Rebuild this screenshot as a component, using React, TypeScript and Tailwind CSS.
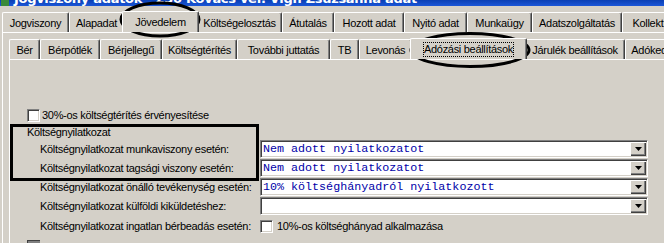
import React from "react";

const FONT = { fontFamily: '"Liberation Sans", Arial, sans-serif' };

type TabDef = { label: string; w: string; selected?: boolean; focus?: boolean };

function Tab({ label, w, selected, focus }: TabDef) {
  return (
    <div
      className={
        "flex items-center justify-center shrink-0 border-t border-l border-white border-r border-r-[#404040] shadow-[inset_-1px_0_0_#808080] rounded-t-[2px] whitespace-nowrap overflow-hidden " +
        w +
        " " +
        (selected ? "h-[22px] -mx-[2px] relative z-10 bg-[#d4d0c8] -mb-px pb-[1px]" : "h-[20px] pt-[2px]")
      }
    >
      <span className={focus ? "outline outline-1 outline-dotted outline-black leading-[13px]" : ""}>{label}</span>
    </div>
  );
}

function Checkbox() {
  return (
    <div className="w-[13px] h-[13px] bg-white border-t border-l border-[#808080] shadow-[inset_1px_1px_0_#404040,inset_-1px_-1px_0_#d4d0c8] border-r border-b border-r-white border-b-white shrink-0" />
  );
}

function Combo({ value }: { value: string }) {
  return (
    <div className="h-[18px] w-[388px] flex bg-white border-t border-l border-[#808080] border-r border-b border-r-white border-b-white shadow-[inset_1px_1px_0_#404040,inset_-1px_-1px_0_#d4d0c8]">
      <div
        className="flex-1 pl-[2px] pt-[1px] text-[11.7px] leading-[15px] text-[#0000a8] whitespace-pre tracking-normal"
        style={{ fontFamily: '"Liberation Mono", "Courier New", monospace' }}
      >
        {value}
      </div>
      <div className="mt-[1px] mr-[1px] mb-[1px] w-[16px] h-[14px] bg-[#d4d0c8] shadow-[inset_1px_1px_0_#ffffff,inset_-1px_-1px_0_#404040,inset_-2px_-2px_0_#808080] flex items-center justify-center">
        <svg width="7" height="4" viewBox="0 0 7 4">
          <path d="M0 0h7L3.5 4z" fill="#000" />
        </svg>
      </div>
    </div>
  );
}

const row1: TabDef[] = [
  { label: "Jogviszony", w: "w-[67px]" },
  { label: "Alapadat", w: "w-[55px]" },
  { label: "Jövedelem", w: "w-[77px]", selected: true },
  { label: "Költségelosztás", w: "w-[85px]" },
  { label: "Átutalás", w: "w-[52px]" },
  { label: "Hozott adat", w: "w-[70px]" },
  { label: "Nyitó adat", w: "w-[63px]" },
  { label: "Munkaügy", w: "w-[65px]" },
  { label: "Adatszolgáltatás", w: "w-[90px]" },
  { label: "Kollektív szerződés", w: "w-[110px]" },
];

const row2: TabDef[] = [
  { label: "Bér", w: "w-[31px]" },
  { label: "Bérpótlék", w: "w-[60px]" },
  { label: "Bérjellegű", w: "w-[62px]" },
  { label: "Költségtérítés", w: "w-[75px]" },
  { label: "További juttatás", w: "w-[93px]" },
  { label: "TB", w: "w-[29px]" },
  { label: "Levonás", w: "w-[53px]" },
  { label: "Adózási beállítások", w: "w-[117px]", selected: true, focus: true },
  { label: "Járulék beállítások", w: "w-[100px]" },
  { label: "Adókedvezmény", w: "w-[90px]" },
];

export default function App() {
  const labels = [
    "Költségnyilatkozat munkaviszony esetén:",
    "Költségnyilatkozat tagsági viszony esetén:",
    "Költségnyilatkozat önálló tevékenység esetén:",
    "Költségnyilatkozat külföldi kiküldetéshez:",
  ];
  const values = ["Nem adott nyilatkozatot", "Nem adott nyilatkozatot", "10% költséghányadról nyilatkozott", ""];
  return (
    <div className="relative w-[664px] h-[243px] overflow-hidden bg-[#d4d0c8] text-[11px] tracking-[-0.3px] text-black" style={FONT}>
      {/* title bar */}
      <div className="h-[6px] overflow-hidden bg-gradient-to-b from-[#0a3fb4] to-[#1a56d8] flex">
        <div className="w-[8px] h-[6px] bg-[#3a8a3a] ml-[1px]" />
        <div className="text-white font-bold text-[13px] leading-[13px] -mt-[8px] pl-[5px] whitespace-nowrap" style={{ fontFamily: '"DejaVu Sans", sans-serif' }}>
          Jogviszony adatok - 230 Kovács ver. Vigh Zsuzsanna adat
        </div>
      </div>

      {/* row 1 tabs */}
      <div className="flex items-end h-[26px] pl-[2px] overflow-hidden">
        {row1.map((t) => (
          <Tab key={t.label} {...t} />
        ))}
      </div>

      {/* outer panel */}
      <div className="ml-[2px] border-t border-l border-white pl-[6px] pt-[5px] h-[211px]">
        <div className="flex items-end h-[21px] overflow-hidden">
          {row2.map((t) => (
            <Tab key={t.label} {...t} />
          ))}
        </div>
        {/* inner panel */}
        <div className="border-t border-l border-white h-[190px] pl-[17px] pt-[48px]">
          <div className="flex items-center gap-[2px] h-[14px]">
            <Checkbox />
            <span>30%-os költségtérítés érvényesítése</span>
          </div>
          <div className="mt-[3px] leading-[14px]">Költségnyilatkozat</div>
          <div className="mt-[1px] flex flex-col gap-[1px]">
            {labels.map((l, i) => (
              <div key={l} className="flex items-center h-[18px]">
                <div className="w-[233px] pl-[13px] whitespace-nowrap">{l}</div>
                <Combo value={values[i]} />
              </div>
            ))}
            <div className="flex items-center h-[18px] mt-[1px]">
              <div className="w-[233px] pl-[13px] whitespace-nowrap">Költségnyilatkozat ingatlan bérbeadás esetén:</div>
              <Checkbox />
              <span className="ml-[4px]">10%-os költséghányad alkalmazása</span>
            </div>
          </div>
          <div className="mt-[5px] w-[13px] h-[13px] bg-[#808080] border-t border-l border-[#404040]" />
        </div>
      </div>

      {/* annotations */}
      <svg className="absolute left-0 top-0 pointer-events-none" width="664" height="243">
        <ellipse cx="160" cy="19.5" rx="39" ry="16.5" fill="none" stroke="#000" strokeWidth="3" />
        <ellipse cx="470" cy="50" rx="59" ry="16.5" fill="none" stroke="#000" strokeWidth="3" />
      </svg>
      <div className="absolute left-[10px] top-[124px] w-[249px] h-[57px] border-[3px] border-black pointer-events-none" />
    </div>
  );
}
